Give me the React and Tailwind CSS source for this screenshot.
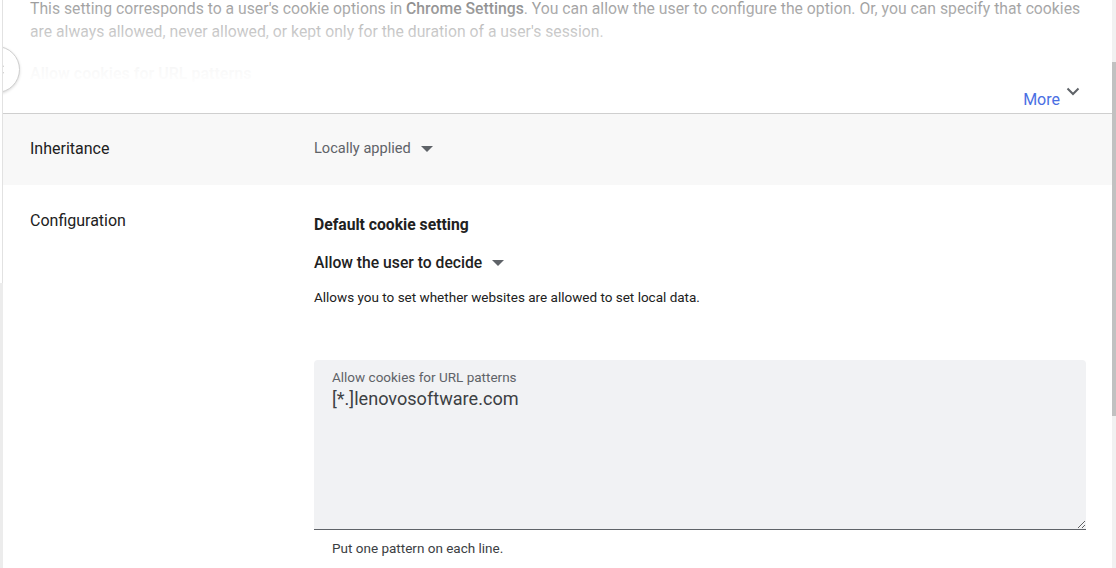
import React from 'react';

const font = { fontFamily: 'Roboto, "Noto Sans", Arial, sans-serif' };

const Caret = ({ className = '' }) => (
  <svg viewBox="0 0 12 6" className={`w-[12px] h-[6px] ${className}`}>
    <path d="M0 0h12L6 6z" fill="#5f6368" />
  </svg>
);

export default function App() {
  return (
    <div className='flex h-[568px] w-[1116px] overflow-hidden bg-white text-[#212121]' style={font}>
      {/* left edge of the neighbouring pane */}
      <div className='w-[3px] flex flex-col shrink-0'>
        <div className='h-[283px] border-r border-[#e2e2e2]'></div>
        <div className='flex-1 bg-[#ececec]'></div>
      </div>

      <div className='flex-1 flex flex-col min-w-0'>
        {/* Faded policy description */}
        <div className='relative h-[114px] shrink-0 border-b border-[#cfcfcf] overflow-hidden'>
          <div className='pl-[27px] pr-[20px] -mt-[3px]'>
            <p className='text-[15.75px] leading-[23px] text-[#6f6f6f]'>
              This setting corresponds to a user's cookie options in <span className='font-medium text-[#555]'>Chrome Settings</span>. You can allow the user to configure the option. Or, you can specify that cookies are always allowed, never allowed, or kept only for the duration of a user's session.
            </p>
            <p className='mt-[19px] text-[16px] leading-[24px] font-semibold text-[#212121]'>Allow cookies for URL patterns</p>
          </div>
          <div className='absolute inset-0 bg-[linear-gradient(to_bottom,rgba(255,255,255,0.3)_0px,rgba(255,255,255,0.62)_32px,rgba(255,255,255,0.97)_68px,#fff_86px)]'></div>
          <div className='absolute left-[-30px] top-[46px] w-[47px] h-[47px] rounded-full bg-white border border-[#cfcfcf] shadow-[0_1px_3px_rgba(0,0,0,0.15)] flex items-center justify-end pr-[15px]'>
            <svg viewBox="0 0 8 12" className='w-[6px] h-[9px]'>
              <path d="M7 1L2 6l5 5" stroke="#777" strokeWidth="1.6" fill="none" />
            </svg>
          </div>
          <div className='absolute right-[32px] bottom-[3px] flex items-start gap-[6px]'>
            <span className='text-[16px] leading-[20px] text-[#4a6fe3] mt-[3px]'>More</span>
            <svg viewBox="0 0 14 9" className='w-[14px] h-[9px] mt-[0px]'>
              <path d="M1.5 1.5L7 7l5.5-5.5" stroke="#5f6368" strokeWidth="2" fill="none" />
            </svg>
          </div>
        </div>

        {/* Inheritance */}
        <div className='h-[71px] shrink-0 bg-[#f8f8f8] flex items-center pl-[27px]'>
          <div className='w-[284px] text-[16px] leading-[24px] -mt-[1px]'>Inheritance</div>
          <div className='flex items-center gap-[10px] text-[14.6px] text-[#5f6368] -mt-[1px]'>
            <span>Locally applied</span>
            <Caret />
          </div>
        </div>

        {/* Configuration */}
        <div className='flex pl-[27px] pr-[26px]'>
          <div className='w-[284px] shrink-0 pt-[24px] text-[16px] leading-[24px]'>Configuration</div>
          <div className='flex-1 pt-[28px] flex flex-col'>
            <div className='text-[15.7px] leading-[24px] font-bold'>Default cookie setting</div>
            <div className='mt-[14px] flex items-center gap-[10px]'>
              <span className='text-[15.7px] leading-[24px] font-medium'>Allow the user to decide</span>
              <Caret />
            </div>
            <div className='mt-[12px] text-[13.5px] leading-[20px]'>Allows you to set whether websites are allowed to set local data.</div>

            <div className='mt-[53px] h-[170px] rounded-t-[4px] bg-[#f1f2f4] border-b border-[#5f6368] flex flex-col'>
              <label className='block pt-[9px] px-[18px] text-[13.5px] leading-[16px] text-[#5f6368]'>Allow cookies for URL patterns</label>
              <textarea
                className='flex-1 w-full bg-transparent px-[18px] pt-[3px] text-[18.1px] leading-[22px] text-[#3c4043] outline-none resize-y'
                style={font}
                defaultValue='[*.]lenovosoftware.com'
              />
            </div>
            <div className='pt-[10px] pl-[18px] text-[13.5px] leading-[16px] text-[#3c4043]'>Put one pattern on each line.</div>
          </div>
        </div>
      </div>

      {/* scrollbar */}
      <div className='w-[4px] shrink-0 bg-[#f1f1f1] flex flex-col'>
        <div className='h-[62px]'></div>
        <div className='h-[354px] bg-[#c1c1c1]'></div>
      </div>
    </div>
  );
}
